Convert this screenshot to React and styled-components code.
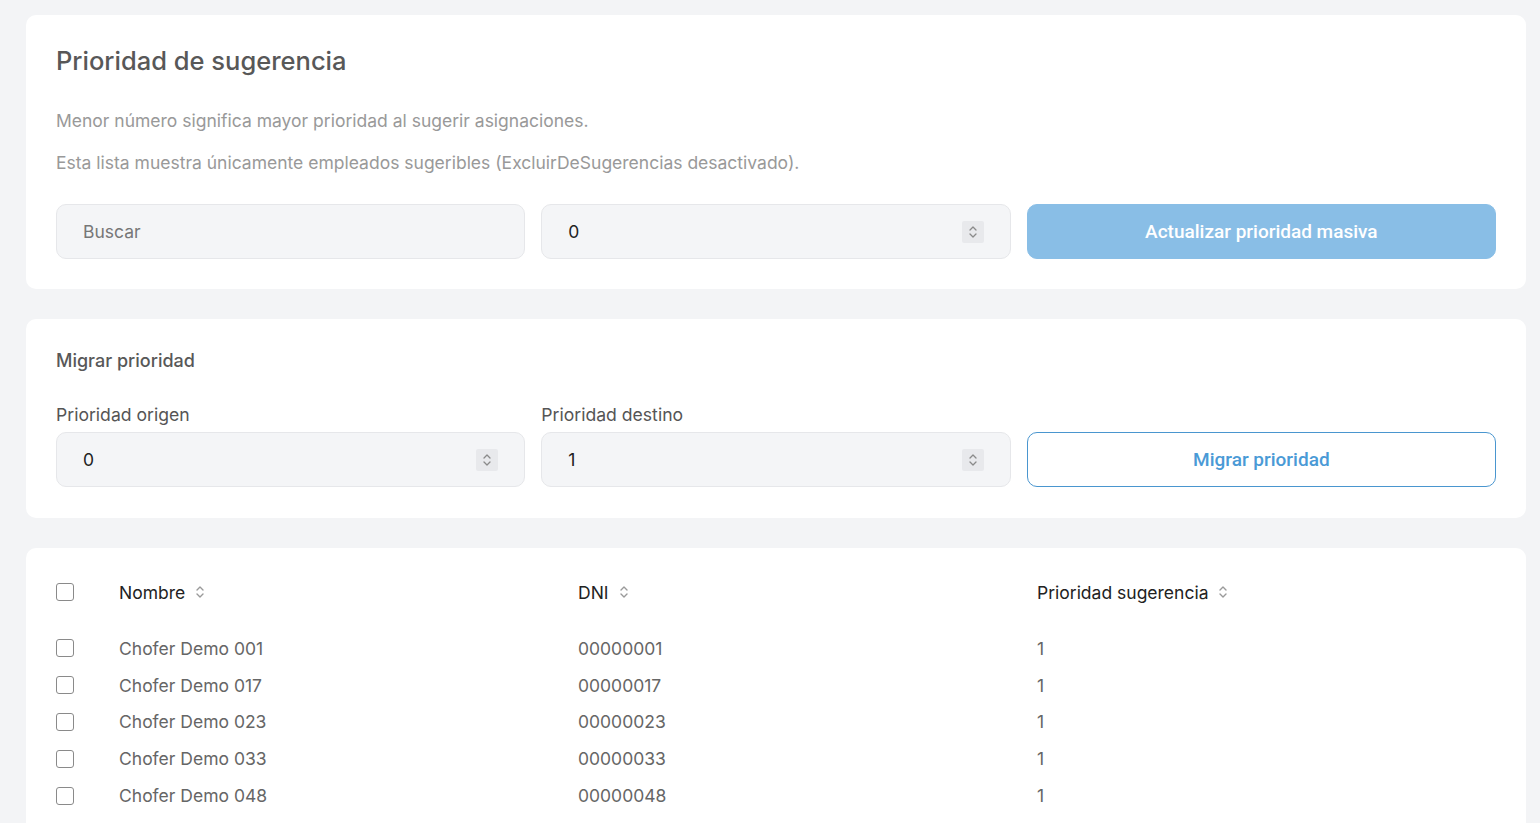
import styled, { createGlobalStyle } from "styled-components";

const GlobalStyle = createGlobalStyle`
  html, body {
    margin: 0;
    padding: 0;
    background: #f3f4f6;
    font-family: Inter, "Noto Sans", sans-serif;
  }
  * { box-sizing: border-box; }
`;

const rows = [
  { name: "Chofer Demo 001", dni: "00000001", prioridad: 1 },
  { name: "Chofer Demo 017", dni: "00000017", prioridad: 1 },
  { name: "Chofer Demo 023", dni: "00000023", prioridad: 1 },
  { name: "Chofer Demo 033", dni: "00000033", prioridad: 1 },
  { name: "Chofer Demo 048", dni: "00000048", prioridad: 1 }
];

const SpinIcon = () => (
  <StSpin>
    <svg width="10" height="16" viewBox="0 0 10 16" fill="none" stroke="#8a8a8a" strokeWidth="1.3" strokeLinecap="round" strokeLinejoin="round">
      <path d="M2 6 L5 3 L8 6" />
      <path d="M2 10 L5 13 L8 10" />
    </svg>
  </StSpin>
);

const SortIcon = () => (
  <svg width="10" height="16" viewBox="0 0 10 16" fill="none" stroke="#9a9a9a" strokeWidth="1.4" strokeLinecap="round" strokeLinejoin="round">
    <path d="M2 6 L5 3 L8 6" />
    <path d="M2 10 L5 13 L8 10" />
  </svg>
);

const NumberField = ({ value }) => (
  <StField>
    <StInput type="text" defaultValue={value} $dark />
    <SpinIcon />
  </StField>
);

const App = () => {
  return (
    <StPage>
      <GlobalStyle />
      <StCard>
        <StTitle>Prioridad de sugerencia</StTitle>
        <StHelp>Menor número significa mayor prioridad al sugerir asignaciones.</StHelp>
        <StHelp>Esta lista muestra únicamente empleados sugeribles (ExcluirDeSugerencias desactivado).</StHelp>
        <StFormRow>
          <StField>
            <StInput type="text" placeholder="Buscar" />
          </StField>
          <NumberField value="0" />
          <StButton disabled>Actualizar prioridad masiva</StButton>
        </StFormRow>
      </StCard>

      <StCard $migrate>
        <StSubtitle>Migrar prioridad</StSubtitle>
        <StFormRow>
          <StGroup>
            <StLabel>Prioridad origen</StLabel>
            <NumberField value="0" />
          </StGroup>
          <StGroup>
            <StLabel>Prioridad destino</StLabel>
            <NumberField value="1" />
          </StGroup>
          <StButton $outline>Migrar prioridad</StButton>
        </StFormRow>
      </StCard>

      <StCard $table>
        <StTable>
          <StHeadRow>
            <StCheck />
            <StHeadCell>
              Nombre <SortIcon />
            </StHeadCell>
            <StHeadCell>
              DNI <SortIcon />
            </StHeadCell>
            <StHeadCell>
              Prioridad sugerencia <SortIcon />
            </StHeadCell>
          </StHeadRow>
          {rows.map((row) => (
            <StRow key={row.dni}>
              <StCheck />
              <StCell>{row.name}</StCell>
              <StCell>{row.dni}</StCell>
              <StCell>{row.prioridad}</StCell>
            </StRow>
          ))}
        </StTable>
      </StCard>
    </StPage>
  );
};

const StPage = styled.div`
  display: flex;
  flex-direction: column;
  gap: 30px;
  padding: 15px 14px 0 26px;
  height: 823px;
  overflow: hidden;
`;

const StCard = styled.div`
  flex-shrink: 0;
  background: #fff;
  border-radius: 10px;
  padding: ${(p) => (p.$table ? "23px 30px 30px" : p.$migrate ? "29px 30px 31px" : "28px 30px 30px")};
`;

const StTitle = styled.h2`
  margin: 0 0 30px;
  font-size: 25.5px;
  line-height: 36px;
  font-weight: 500;
  color: #585858;
`;

const StHelp = styled.p`
  margin: 0 0 18px;
  font-size: 17.5px;
  line-height: 24px;
  color: #999;
`;

const StSubtitle = styled.h3`
  margin: 1px 0 30px;
  font-size: 18px;
  line-height: 24px;
  font-weight: 500;
  color: #585858;
`;

const StFormRow = styled.div`
  display: grid;
  grid-template-columns: 1fr 1fr 1fr;
  gap: 16px;
  align-items: end;
  margin-top: 29px;
  ${StSubtitle} + & {
    margin-top: 0;
  }
`;

const StGroup = styled.div`
  display: flex;
  flex-direction: column;
  gap: 5px;
`;

const StLabel = styled.label`
  font-size: 17.6px;
  line-height: 24px;
  color: #555;
`;

const StField = styled.div`
  display: flex;
  align-items: center;
  height: 55px;
  padding: 0 26px 0 26px;
  background: #f4f5f7;
  border: 1px solid #e6e7ea;
  border-radius: 10px;
`;

const StInput = styled.input`
  flex: 1;
  min-width: 0;
  border: none;
  outline: none;
  background: transparent;
  font-family: Inter, "Noto Sans", sans-serif;
  font-size: 17.5px;
  color: ${(p) => (p.$dark ? "#222" : "#444")};
  padding: 0;
  &::placeholder {
    color: #777;
  }
`;

const StSpin = styled.span`
  display: flex;
  align-items: center;
  justify-content: center;
  width: 22px;
  height: 22px;
  background: #e8e9ec;
  border-radius: 2px;
`;

const StButton = styled.button`
  height: 55px;
  border-radius: 10px;
  font-family: Roboto, "Noto Sans", sans-serif;
  font-size: 19px;
  font-weight: 500;
  cursor: pointer;
  background: ${(p) => (p.$outline ? "#fff" : "#89bee6")};
  color: ${(p) => (p.$outline ? "#4a9ad6" : "#fff")};
  border: 1px solid ${(p) => (p.$outline ? "#4a96cf" : "#89bee6")};
  &:disabled {
    cursor: default;
  }
`;

const StTable = styled.div`
  display: flex;
  flex-direction: column;
`;

const StHeadRow = styled.div`
  display: grid;
  grid-template-columns: 63px 459px 459px 1fr;
  align-items: center;
  height: 42px;
  margin-bottom: 17px;
`;

const StRow = styled.div`
  display: grid;
  grid-template-columns: 63px 459px 459px 1fr;
  align-items: center;
  height: 36.8px;
`;

const StCheck = styled.span`
  display: block;
  width: 18px;
  height: 18px;
  border: 1.5px solid #8a8a8a;
  border-radius: 3px;
  background: #fff;
`;

const StHeadCell = styled.div`
  display: flex;
  align-items: center;
  gap: 10px;
  font-size: 17.5px;
  color: #222;
`;

const StCell = styled.div`
  font-size: 17.5px;
  color: #666;
`;

export default App;
